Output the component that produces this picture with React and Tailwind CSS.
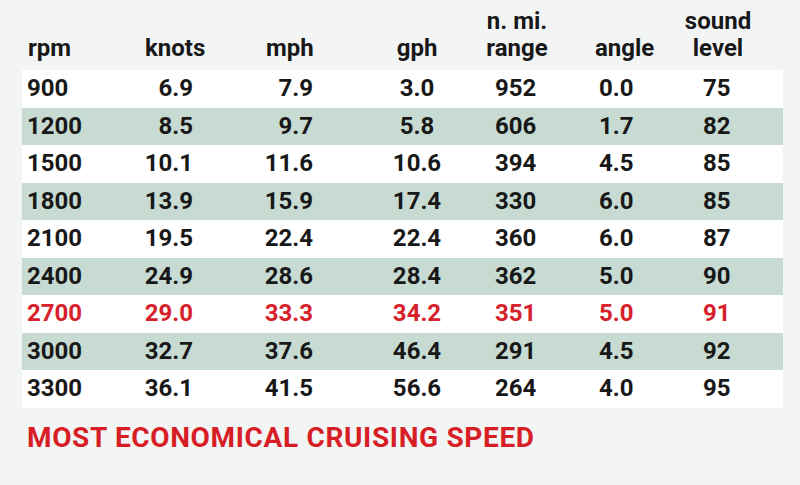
import React from "react";

const rows = [
  ["900", "6.9", "7.9", "3.0", "952", "0.0", "75"],
  ["1200", "8.5", "9.7", "5.8", "606", "1.7", "82"],
  ["1500", "10.1", "11.6", "10.6", "394", "4.5", "85"],
  ["1800", "13.9", "15.9", "17.4", "330", "6.0", "85"],
  ["2100", "19.5", "22.4", "22.4", "360", "6.0", "87"],
  ["2400", "24.9", "28.6", "28.4", "362", "5.0", "90"],
  ["2700", "29.0", "33.3", "34.2", "351", "5.0", "91"],
  ["3000", "32.7", "37.6", "46.4", "291", "4.5", "92"],
  ["3300", "36.1", "41.5", "56.6", "264", "4.0", "95"],
];

const cols = "grid grid-cols-[110px_90px_120px_140px_110px_80px_111px]";

const App = () => {
  return (
    <div className="w-[800px] h-[485px] bg-[#f3f5f5] font-[Roboto,sans-serif] font-bold text-[#181818] pl-[22px] pt-[8px] overflow-hidden">
      <div className={`${cols} w-[761px] items-end text-[24px] leading-[27px]`}>
        <div className="pl-[6px]">rpm</div>
        <div className="pl-[13px] whitespace-nowrap">knots</div>
        <div className="pl-[44px]">mph</div>
        <div className="text-center pl-[10px]">gph</div>
        <div className="text-center pr-[40px]">
          <div>n. mi.</div>
          <div>range</div>
        </div>
        <div className="pl-[3px]">angle</div>
        <div className="text-center pr-[19px]">
          <div>sound</div>
          <div>level</div>
        </div>
      </div>

      <div className="mt-[8px] w-[761px] flex flex-col">
        {rows.map((r, i) => (
          <div
            key={r[0]}
            className={`${cols} h-[37.5px] items-center text-[24px] leading-[37.5px] ${
              i % 2 === 1 ? "bg-[#c7dbd3]" : "bg-white"
            } ${r[0] === "2700" ? "text-[#d7202a]" : ""}`}
          >
            <div className="pl-[5px]">{r[0]}</div>
            <div className="text-right pr-[29px]">{r[1]}</div>
            <div className="text-right pr-[29px]">{r[2]}</div>
            <div className="text-center pl-[10px]">{r[3]}</div>
            <div className="pl-[13px]">{r[4]}</div>
            <div className="pl-[7px]">{r[5]}</div>
            <div className="pl-[31px]">{r[6]}</div>
          </div>
        ))}
      </div>

      <div className="mt-[16px] pl-[5px] text-[28px] leading-[28px] tracking-[0.65px] text-[#d71e26] whitespace-nowrap">
        MOST ECONOMICAL CRUISING SPEED
      </div>
    </div>
  );
};

export default App;
